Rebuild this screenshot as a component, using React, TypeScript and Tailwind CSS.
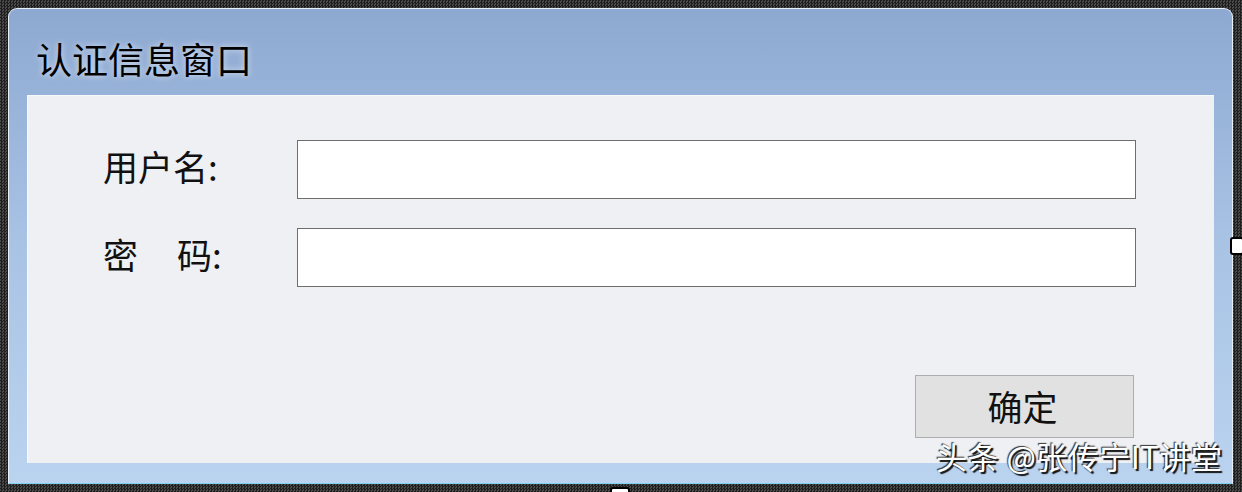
import React from "react";

const cjk = "font-['Microsoft_YaHei','Noto_Sans_CJK_SC',sans-serif]";

const Field: React.FC<{ label: React.ReactNode }> = ({ label }) => (
  <div className="flex items-center">
    <div className="w-[194px] text-[35px] leading-none text-[#111] pb-[9px]">{label}</div>
    <input
      type="text"
      className="w-[839px] h-[59px] bg-white border border-[#6e6e6e] outline-none"
    />
  </div>
);

export default function App() {
  return (
    <div
      className={`relative w-[1242px] h-[492px] overflow-hidden pt-[8px] pl-[8px] ${cjk} [background:repeating-conic-gradient(#1e1e1e_0%_25%,#4a4a4a_0%_50%)_0_0/3px_3px]`}
    >
      {/* window */}
      <div className="w-[1225px] h-[476px] rounded-t-[9px] border border-[#e8eff9] border-b-[#7fd0f4] bg-gradient-to-b from-[#8ea9d1] via-[#a9c3e5] to-[#bad3ef] flex flex-col">
        <div className="h-[86px] flex items-center pl-[27px] pt-[12px]">
          <span className="text-[36px] leading-none text-black [text-shadow:0_0_6px_rgba(255,255,255,0.7)]">
            认证信息窗口
          </span>
        </div>
        <div className="mx-[18px] h-[368px] bg-[#eef0f3] border-t border-l border-[#f8f9fb] pl-[75px] pt-[44px] flex flex-col">
          <div className="flex flex-col gap-[29px]">
            <Field label="用户名:" />
            <Field
              label={
                <span>
                  密<span className="inline-block w-[39px]" />码:
                </span>
              }
            />
          </div>
          <div className="flex justify-end pr-[80px] mt-[88px]">
            <button className="w-[219px] h-[63px] bg-[#e1e1e1] border border-[#adadad] text-[35px] leading-none text-[#111] pb-[2px] pr-[4px]">
              确定
            </button>
          </div>
        </div>
      </div>

      {/* watermark */}
      <div className="absolute left-[936px] top-[440px] text-[31px] tracking-[0.5px] leading-none text-white whitespace-nowrap [text-shadow:2px_2px_1px_#111,-1px_-1px_1px_#333]">
        头条 @张传宁IT讲堂
      </div>

      {/* resize handles */}
      <div className="absolute left-[1230px] top-[237px] w-[14px] h-[18px] bg-white border-2 border-black rounded-[3px]" />
      <div className="absolute left-[610px] top-[487px] w-[20px] h-[10px] bg-white border-2 border-black rounded-[3px]" />
    </div>
  );
}
